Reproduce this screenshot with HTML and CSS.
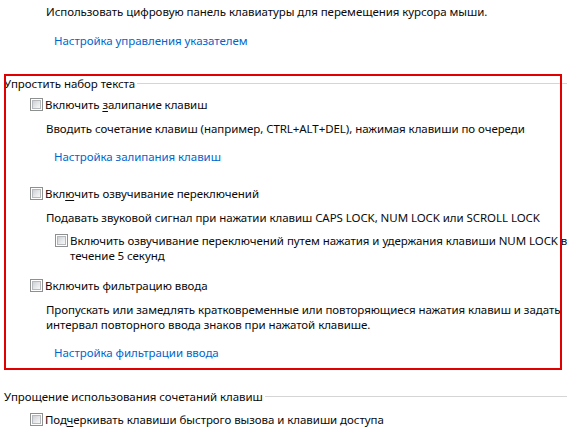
FILE: index.html
```html
<!DOCTYPE html>
<html lang="ru">
<head>
<meta charset="utf-8">
<link rel="stylesheet" href="styles.css">
</head>
<body>
<div class="page">
  <div class="text r1">Использовать цифровую панель клавиатуры для перемещения курсора мыши.</div>
  <div class="link l1">Настройка управления указателем</div>

  <div class="group g1">
    <div class="title"><span>Упростить набор текста</span><i class="rule"></i></div>
    <div class="check c1"><span class="box"></span><span>Включить <u>з</u>алипание клавиш</span></div>
    <div class="text d1">Вводить сочетание клавиш (например, CTRL+ALT+DEL), нажимая клавиши по очереди</div>
    <div class="link l2">Настройка залипания клавиш</div>
    <div class="check c2"><span class="box"></span><span>Вкл<u>ю</u>чить озвучивание переключений</span></div>
    <div class="text d2">Подавать звуковой сигнал при нажатии клавиш CAPS LOCK, NUM LOCK или SCROLL LOCK</div>
    <div class="check nested"><span class="box"></span><span>Включить озвучивание переключений путем нажатия и удержания клавиши NUM LOCK в<br>течение 5 секунд</span></div>
    <div class="check c3"><span class="box"></span><span>Включить фильтрацию ввода</span></div>
    <div class="text d3">Пропускать или замедлять кратковременные или повторяющиеся нажатия клавиш и задать<br>интервал повторного ввода знаков при нажатой клавише.</div>
    <div class="link l3">Настройка фильтрации ввода</div>
    <div class="highlight"></div>
  </div>

  <div class="group g2">
    <div class="title"><span>Упрощение использования сочетаний клавиш</span><i class="rule"></i></div>
    <div class="check c4"><span class="box"></span><span>Под<u>ч</u>еркивать клавиши быстрого вызова и клавиши доступа</span></div>
  </div>
</div>
</body>
</html>
```
FILE: styles.css
```css
html, body {
  margin: 0;
  padding: 0;
  background: #ffffff;
}
body {
  width: 567px;
  height: 446px;
  overflow: hidden;
  font-family: "Noto Sans", "Open Sans", sans-serif;
  font-size: 11.5px;
  line-height: 15px;
  letter-spacing: -0.06px;
  color: #0a0a0a;
}
.page {
  padding-top: 4px;
}
.text {
  padding-left: 46px;
  white-space: nowrap;
}
.link {
  padding-left: 54px;
  color: #0066cc;
  white-space: nowrap;
}
.l1 { margin-top: 14px; }
.group { position: relative; }
.g1 { margin-top: 28px; }
.title {
  display: flex;
  align-items: center;
  padding-left: 4px;
  white-space: nowrap;
}
.title .rule {
  flex: 1;
  height: 1px;
  background: #d5d5d5;
  margin-left: 2px;
}
.check {
  display: flex;
  align-items: flex-start;
  padding-left: 30px;
  white-space: nowrap;
}
.check .box {
  flex: none;
  box-sizing: border-box;
  width: 13px;
  height: 13px;
  margin-top: 1px;
  margin-right: 2px;
  border: 1px solid #8e8f8f;
  background: #ffffff;
  padding: 1px;
}
.check .box::after {
  content: "";
  display: block;
  width: 9px;
  height: 9px;
  box-sizing: border-box;
  border: 1px solid #b5b8bc;
  background: linear-gradient(135deg, #cdd0d4 0%, #e6e7e9 55%, #f8f8f8 100%);
}
.check u { text-decoration-thickness: 1px; text-underline-offset: 2px; }
.c1 { margin-top: 6px; }
.d1 { margin-top: 9px; }
.l2 { margin-top: 13px; }
.c2 { margin-top: 22px; }
.d2 { margin-top: 9px; }
.nested { margin-top: 8px; padding-left: 55px; }
.c3 { margin-top: 15px; }
.d3 { margin-top: 9px; }
.l3 { margin-top: 13px; }
.g2 { margin-top: 29px; }
.c4 { margin-top: 8px; }
.highlight {
  position: absolute;
  left: 4px;
  top: -2px;
  width: 558px;
  height: 296px;
  box-sizing: border-box;
  border: 2px solid #e00000;
  pointer-events: none;
}
```
